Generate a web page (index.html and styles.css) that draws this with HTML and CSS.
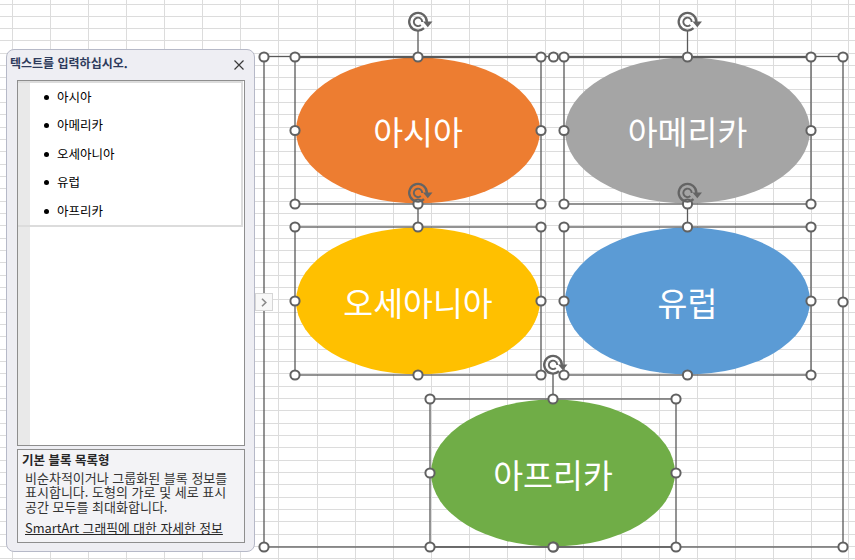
FILE: index.html
```html
<!DOCTYPE html>
<html lang="ko">
<head>
    <meta charset="UTF-8">
    <meta name="viewport" content="width=device-width, initial-scale=1.0">
    <title>SmartArt 텍스트 창</title>
    <link rel="stylesheet" href="styles.css">
</head>
<body>

<svg class="sheet" width="855" height="560" viewBox="0 0 855 560">
    <defs>
        <symbol id="rotate" viewBox="-15 -12 30 24" overflow="visible">
            <path d="M6 6.2 A8.8 8.8 0 1 1 8.8 0" fill="none" stroke="#646464" stroke-width="2.3"/>
            <path d="M2.8 3 A4.2 4.2 0 1 1 4.2 0" fill="none" stroke="#646464" stroke-width="1.9"/>
            <polygon points="5,-0.5 14.5,-0.5 9.8,5.2" fill="#646464"/>
        </symbol>
    </defs>

    <!-- 시트 눈금선 -->
    <path class="grid" d="M12.5 0V560M50.5 0V560M88.5 0V560M126.5 0V560M164.5 0V560M202.5 0V560M240.5 0V560M278.5 0V560M317.5 0V560M355.5 0V560M393.5 0V560M431.5 0V560M469.5 0V560M507.5 0V560M545.5 0V560M583.5 0V560M621.5 0V560M659.5 0V560M697.5 0V560M735.5 0V560M773.5 0V560M811.5 0V560M848.5 0V560
        M0 4.5H855M0 16.5H855M0 28.5H855M0 40.5H855M0 53.5H855M0 65.5H855M0 77.5H855M0 89.5H855M0 102.5H855M0 114.5H855M0 127.5H855M0 139.5H855M0 151.5H855M0 164.5H855M0 176.5H855M0 188.5H855M0 201.5H855M0 213.5H855M0 225.5H855M0 238.5H855M0 250.5H855M0 262.5H855M0 275.5H855M0 287.5H855M0 299.5H855M0 312.5H855M0 324.5H855M0 336.5H855M0 349.5H855M0 361.5H855M0 373.5H855M0 386.5H855M0 398.5H855M0 410.5H855M0 423.5H855M0 435.5H855M0 447.5H855M0 460.5H855M0 472.5H855M0 484.5H855M0 497.5H855M0 509.5H855M0 521.5H855M0 534.5H855M0 546.5H855M0 558.5H855"/>

    <!-- 도형 -->
    <ellipse cx="418" cy="130.5" rx="122" ry="73" fill="#ed7d31"/>
    <ellipse cx="687.5" cy="130.5" rx="122.5" ry="73" fill="#a5a5a5"/>
    <ellipse cx="418" cy="301" rx="122" ry="73.5" fill="#ffc000"/>
    <ellipse cx="687.5" cy="301" rx="122.5" ry="73.5" fill="#5b9bd5"/>
    <ellipse cx="553" cy="473" rx="122" ry="73.5" fill="#70ad47"/>

    <text class="shape-label" x="418" y="130.5">아시아</text>
    <text class="shape-label" x="687.5" y="130.5">아메리카</text>
    <text class="shape-label" x="418" y="301">오세아니아</text>
    <text class="shape-label" x="687.5" y="301">유럽</text>
    <text class="shape-label" x="553" y="473">아프리카</text>

    <!-- 선택 상자 -->
    <g class="frame">
        <rect x="264" y="56.5" width="579" height="490.5"/>
        <rect x="295" y="57.5" width="246" height="146.5"/>
        <rect x="564" y="57.5" width="247" height="146.5"/>
        <rect x="295" y="227" width="246" height="148"/>
        <rect x="564" y="227" width="247" height="148"/>
        <rect x="430" y="399" width="246" height="148"/>
        <path d="M418 31V57M687.5 31V57M418 202V227M687.5 202V227M553 374V399"/>
    </g>

    <g class="handles">
        <circle cx="264" cy="57" r="4.6"/><circle cx="553.5" cy="57" r="4.6"/><circle cx="843" cy="57" r="4.6"/>
        <circle cx="264" cy="302" r="4.6"/><circle cx="843" cy="302" r="4.6"/>
        <circle cx="264" cy="547" r="4.6"/><circle cx="553.5" cy="547" r="4.6"/><circle cx="843" cy="547" r="4.6"/>

        <circle cx="295" cy="57" r="4.6"/><circle cx="418" cy="57" r="4.6"/><circle cx="541" cy="57" r="4.6"/>
        <circle cx="295" cy="130.5" r="4.6"/><circle cx="541" cy="130.5" r="4.6"/>
        <circle cx="295" cy="204" r="4.6"/><circle cx="418" cy="204" r="4.6"/><circle cx="541" cy="204" r="4.6"/>

        <circle cx="564" cy="57" r="4.6"/><circle cx="687.5" cy="57" r="4.6"/><circle cx="811" cy="57" r="4.6"/>
        <circle cx="564" cy="130.5" r="4.6"/><circle cx="811" cy="130.5" r="4.6"/>
        <circle cx="564" cy="204" r="4.6"/><circle cx="687.5" cy="204" r="4.6"/><circle cx="811" cy="204" r="4.6"/>

        <circle cx="295" cy="227" r="4.6"/><circle cx="418" cy="227" r="4.6"/><circle cx="541" cy="227" r="4.6"/>
        <circle cx="295" cy="301" r="4.6"/><circle cx="541" cy="301" r="4.6"/>
        <circle cx="295" cy="375" r="4.6"/><circle cx="418" cy="375" r="4.6"/><circle cx="541" cy="375" r="4.6"/>

        <circle cx="564" cy="227" r="4.6"/><circle cx="687.5" cy="227" r="4.6"/><circle cx="811" cy="227" r="4.6"/>
        <circle cx="564" cy="301" r="4.6"/><circle cx="811" cy="301" r="4.6"/>
        <circle cx="564" cy="375" r="4.6"/><circle cx="687.5" cy="375" r="4.6"/><circle cx="811" cy="375" r="4.6"/>

        <circle cx="430" cy="399" r="4.6"/><circle cx="553" cy="399" r="4.6"/><circle cx="676" cy="399" r="4.6"/>
        <circle cx="430" cy="473" r="4.6"/><circle cx="676" cy="473" r="4.6"/>
        <circle cx="430" cy="547" r="4.6"/><circle cx="553" cy="547" r="4.6"/><circle cx="676" cy="547" r="4.6"/>
    </g>

    <!-- 회전 핸들 -->
    <use href="#rotate" x="403" y="10" width="30" height="24"/>
    <use href="#rotate" x="672.5" y="10" width="30" height="24"/>
    <use href="#rotate" x="403" y="181" width="30" height="24"/>
    <use href="#rotate" x="672.5" y="181" width="30" height="24"/>
    <use href="#rotate" x="538" y="353" width="30" height="24"/>
</svg>

<div class="pane">
    <div class="pane-head">
        <span class="pane-title">텍스트를 입력하십시오.</span>
        <svg class="pane-close" width="10" height="10" viewBox="0 0 10 10">
            <path d="M0.5 0.5L9.5 9.5M9.5 0.5L0.5 9.5" stroke="#3a3a3a" stroke-width="1.2"/>
        </svg>
    </div>

    <div class="text-box">
        <ul class="bullets">
            <li>아시아</li>
            <li>아메리카</li>
            <li>오세아니아</li>
            <li>유럽</li>
            <li>아프리카</li>
        </ul>
    </div>

    <div class="info">
        <div class="info-title">기본 블록 목록형</div>
        <div class="info-desc">비순차적이거나 그룹화된 블록 정보를<br>표시합니다. 도형의 가로 및 세로 표시<br>공간 모두를 최대화합니다.</div>
        <a class="info-link" href="#">SmartArt 그래픽에 대한 자세한 정보</a>
    </div>

    <div class="pane-toggle">
        <svg width="6" height="9" viewBox="0 0 6 9">
            <path d="M1 0.8L4.8 4.5L1 8.2" fill="none" stroke="#8a8a8a" stroke-width="1.6"/>
        </svg>
    </div>
</div>

</body>
</html>
```

FILE: styles.css
```css
body {
    margin: 0;
    width: 855px;
    height: 560px;
    overflow: hidden;
    position: relative;
    background: #fff;
    font-family: "Noto Sans CJK KR", "Noto Sans", sans-serif;
}
.sheet {
    position: absolute;
    left: 0;
    top: 0;
}
.grid {
    stroke: #dcdcdc;
    stroke-width: 1;
    fill: none;
    shape-rendering: crispEdges;
}
.shape-label {
    font-family: "Noto Sans CJK KR", sans-serif;
    font-size: 32.5px;
    fill: #fff;
    text-anchor: middle;
    dominant-baseline: central;
}
.frame rect,
.frame path {
    fill: none;
    stroke: #5a5a5a;
    stroke-width: 1.3;
}
.handles circle {
    fill: #fff;
    stroke: #616161;
    stroke-width: 2;
}

.pane {
    position: relative;
    width: 247px;
    height: 501px;
    margin: 49px 0 0 6px;
    border: 1px solid #b6b9c8;
    border-radius: 8px;
    background: #eeeef3;
}
.pane-head {
    display: flex;
    justify-content: space-between;
    align-items: flex-start;
    height: 26px;
    padding: 4px 10px 0 3px;
}
.pane-title {
    font-size: 12px;
    line-height: 17px;
    font-weight: 700;
    color: #2e3b5c;
}
.pane-close {
    margin-top: 6px;
}
.text-box {
    height: 364px;
    margin: 0 9px 0 10px;
    border: 1px solid #8e8e8e;
    background: linear-gradient(to right, #e9e9e9 12px, #fff 12px);
}
.bullets {
    list-style: none;
    height: 142px;
    margin: 0 1px 0 0;
    padding: 0;
    border: 2px solid #dcdcdc;
    border-left: 0;
}
.bullets li {
    position: relative;
    padding-left: 39px;
    font-size: 12.5px;
    line-height: 28.4px;
    color: #000;
}
.bullets li::before {
    content: "";
    position: absolute;
    left: 26px;
    top: 12px;
    width: 5px;
    height: 5px;
    border-radius: 50%;
    background: #000;
}
.info {
    height: 92px;
    margin: 3px 9px 0 10px;
    border: 1px solid #8e8e8e;
    background: #f3f3f6;
}
.info-title {
    padding: 2px 0 0 4px;
    font-size: 12.5px;
    line-height: 16px;
    font-weight: 700;
    color: #262626;
}
.info-desc {
    margin-top: 3px;
    padding-left: 7px;
    font-size: 13px;
    line-height: 14.3px;
    color: #333;
}
.info-link {
    display: inline-block;
    margin: 6px 0 0 7px;
    font-size: 12.8px;
    line-height: 15px;
    color: #262626;
    text-decoration: underline;
}
.pane-toggle {
    position: absolute;
    left: 248px;
    top: 243px;
    width: 16px;
    height: 16px;
    display: flex;
    align-items: center;
    justify-content: center;
    background: #f8f8f8;
    border: 1px solid #d6d6d6;
}
```
